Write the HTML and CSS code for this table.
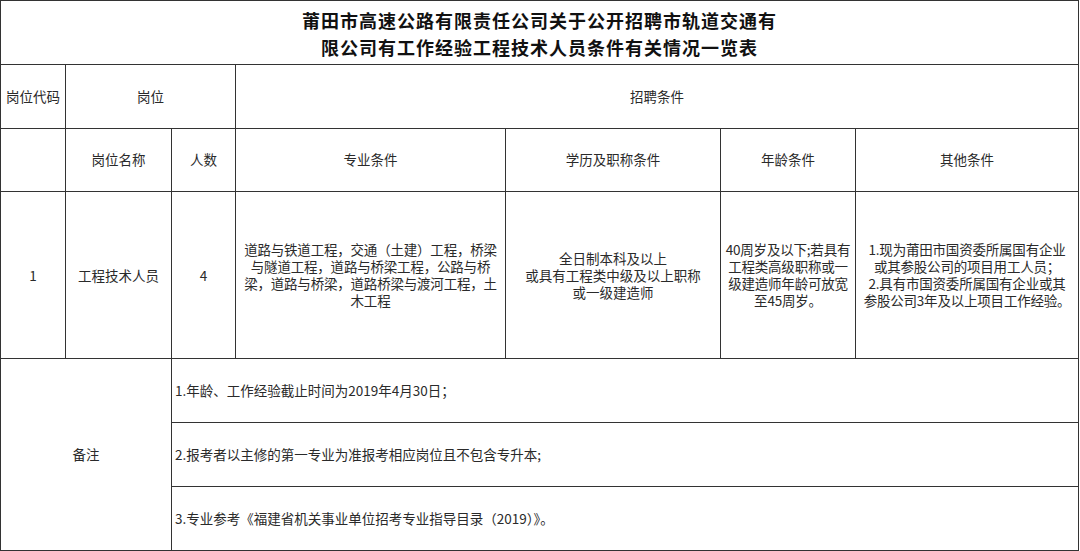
FILE: index.html
```html
<!DOCTYPE html>
<html lang="zh-CN">
<head>
<meta charset="utf-8">
<title>招聘条件一览表</title>
<link rel="stylesheet" href="styles.css">
</head>
<body>
<table class="sheet">
  <colgroup>
    <col class="c-code">
    <col class="c-name">
    <col class="c-num">
    <col class="c-major">
    <col class="c-edu">
    <col class="c-age">
    <col class="c-other">
  </colgroup>
  <tr class="r-title">
    <td colspan="7" class="title">莆田市高速公路有限责任公司关于公开招聘市轨道交通有<br>限公司有工作经验工程技术人员条件有关情况一览表</td>
  </tr>
  <tr class="r-head">
    <td>岗位代码</td>
    <td colspan="2">岗位</td>
    <td colspan="4">招聘条件</td>
  </tr>
  <tr class="r-head">
    <td></td>
    <td>岗位名称</td>
    <td>人数</td>
    <td>专业条件</td>
    <td>学历及职称条件</td>
    <td>年龄条件</td>
    <td>其他条件</td>
  </tr>
  <tr class="r-data">
    <td>1</td>
    <td>工程技术人员</td>
    <td>4</td>
    <td class="tight">道路与铁道工程，交通（土建）工程，桥梁<br>与隧道工程，道路与桥梁工程，公路与桥<br>梁，道路与桥梁，道路桥梁与渡河工程，土<br>木工程</td>
    <td>全日制本科及以上<br>或具有工程类中级及以上职称<br>或一级建造师</td>
    <td class="tight">40周岁及以下;若具有<br>工程类高级职称或一<br>级建造师年龄可放宽<br>至45周岁。</td>
    <td class="tight">1.现为莆田市国资委所属国有企业<br>或其参股公司的项目用工人员；<br>2.具有市国资委所属国有企业或其<br>参股公司3年及以上项目工作经验。</td>
  </tr>
  <tr class="r-note">
    <td colspan="2" rowspan="3">备注</td>
    <td colspan="5" class="note">1.年龄、工作经验截止时间为2019年4月30日；</td>
  </tr>
  <tr class="r-note">
    <td colspan="5" class="note">2.报考者以主修的第一专业为准报考相应岗位且不包含专升本;</td>
  </tr>
  <tr class="r-note">
    <td colspan="5" class="note">3.专业参考《福建省机关事业单位招考专业指导目录（2019）》。</td>
  </tr>
</table>
</body>
</html>
```
FILE: styles.css
```css
html, body {
  margin: 0;
  padding: 0;
  background: #ffffff;
}

.sheet {
  border-collapse: collapse;
  table-layout: fixed;
  width: 1079px;
  font-family: "Noto Sans CJK SC", "Noto Sans", sans-serif;
  font-size: 13.5px;
  color: #2a2a2a;
}

.sheet td {
  border: 1px solid #333333;
  text-align: center;
  vertical-align: middle;
  padding: 0 2px;
  line-height: 17px;
}

.c-code { width: 65px; }
.c-name { width: 106px; }
.c-num { width: 64px; }
.c-major { width: 270px; }
.c-edu { width: 215px; }
.c-age { width: 135px; }
.c-other { width: 223px; }

.r-title { height: 64px; }
.r-head { height: 63.5px; }
.r-data { height: 167px; }
.r-note { height: 64px; }

.sheet td.title {
  font-size: 18px;
  font-weight: 700;
  letter-spacing: 1px;
  line-height: 27px;
  color: #111111;
  padding-top: 2px;
}

.sheet td.tight {
  padding: 0;
  letter-spacing: -0.2px;
}

.sheet td.note {
  text-align: left;
  padding-left: 3px;
}
```
